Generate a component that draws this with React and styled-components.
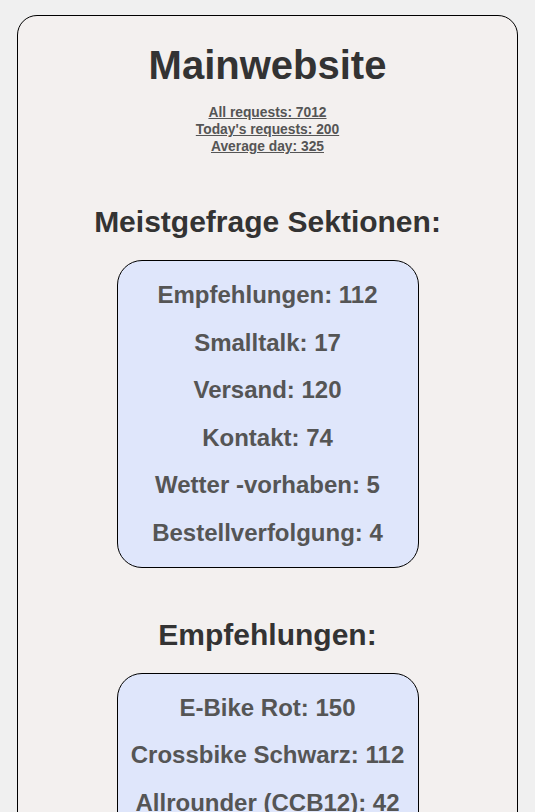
import React from 'react';
import styled, { createGlobalStyle } from 'styled-components';

/* --- DATA --- */
const stats = [
  'All requests: 7012',
  "Today's requests: 200",
  'Average day: 325'
];

const sections = [
  {
    title: 'Meistgefrage Sektionen:',
    items: [
      'Empfehlungen: 112',
      'Smalltalk: 17',
      'Versand: 120',
      'Kontakt: 74',
      'Wetter -vorhaben: 5',
      'Bestellverfolgung: 4'
    ]
  },
  {
    title: 'Empfehlungen:',
    items: ['E-Bike Rot: 150', 'Crossbike Schwarz: 112', 'Allrounder (CCB12): 42']
  }
];

/* --- STYLES --- */
const GlobalStyle = createGlobalStyle`
  html, body {
    margin: 0;
    padding: 0;
    background: #f0f0f0;
    font-family: "Liberation Sans", Arial, sans-serif;
  }
`;

const Page = styled.div`
  padding: 15px 17px 40px 17px;
`;

const Card = styled.div`
  background: #f3f0ef;
  border: 1px solid #000;
  border-radius: 20px;
  padding: 26px 0 30px;
  display: flex;
  flex-direction: column;
  align-items: center;
`;

const Title = styled.h1`
  margin: 0;
  font-size: 40px;
  line-height: 46px;
  font-weight: bold;
  color: #333;
`;

const StatList = styled.div`
  margin-top: 16px;
  display: flex;
  flex-direction: column;
  align-items: center;
`;

const Stat = styled.a`
  font-size: 13.8px;
  line-height: 17px;
  font-weight: bold;
  color: #555;
  text-decoration: underline;
`;

const SectionTitle = styled.h2`
  margin: 50px 0 0;
  font-size: 30px;
  line-height: 34px;
  font-weight: bold;
  color: #333;
`;

const Box = styled.div`
  margin-top: 21px;
  width: 302px;
  box-sizing: border-box;
  background: #dfe6fb;
  border: 1px solid #000;
  border-radius: 25px;
  padding: 20px 0;
  display: flex;
  flex-direction: column;
  align-items: center;
  gap: 20px;
`;

const Item = styled.div`
  font-size: 24px;
  line-height: 27.6px;
  font-weight: bold;
  color: #555;
`;

/* --- Component --- */
const App = () => (
  <>
    <GlobalStyle />
    <Page>
      <Card>
        <Title>Mainwebsite</Title>
        <StatList>
          {stats.map(s => (
            <Stat key={s}>{s}</Stat>
          ))}
        </StatList>
        {sections.map(section => (
          <React.Fragment key={section.title}>
            <SectionTitle>{section.title}</SectionTitle>
            <Box>
              {section.items.map(item => (
                <Item key={item}>{item}</Item>
              ))}
            </Box>
          </React.Fragment>
        ))}
      </Card>
    </Page>
  </>
);

export default App;
